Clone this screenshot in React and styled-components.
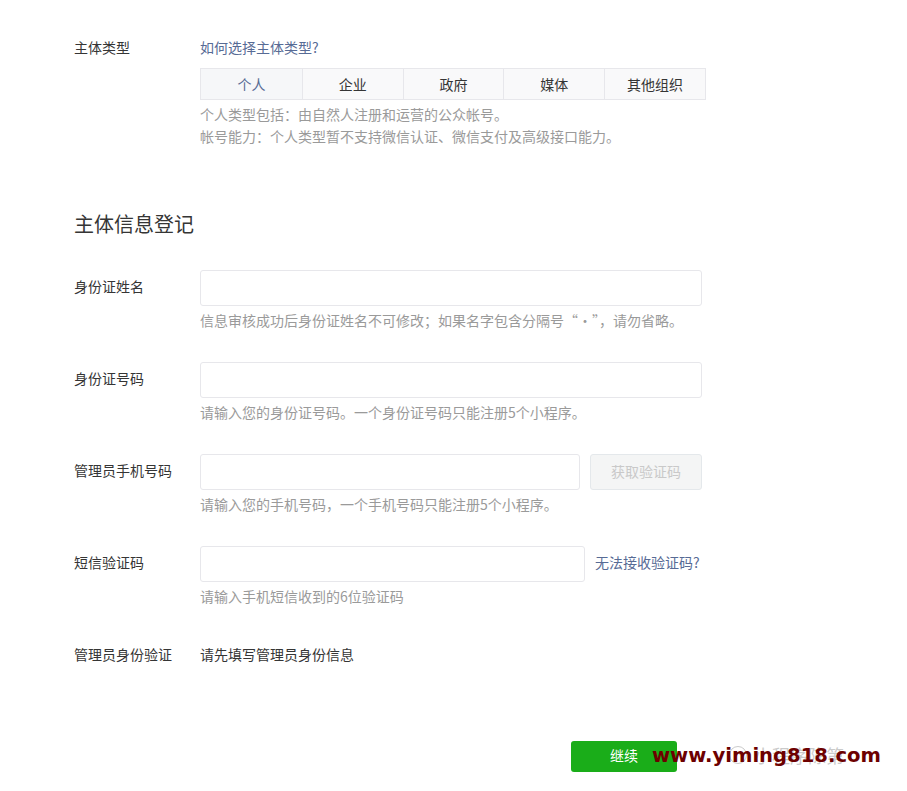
import React from "react";
import styled, { createGlobalStyle } from "styled-components";

const GlobalStyle = createGlobalStyle`
  html, body {
    margin: 0;
    padding: 0;
    background: #fff;
  }
  body {
    font-family: "Noto Sans CJK SC", "Noto Sans", "Liberation Sans", sans-serif;
    font-size: 14px;
    color: #353535;
  }
`;

const Page = styled.div`
  position: relative;
  width: 907px;
  height: 791px;
  padding: 38px 0 0 74px;
  box-sizing: border-box;
  overflow: hidden;
`;

const Row = styled.div`
  display: grid;
  grid-template-columns: 126px 502px;
  align-items: ${({ $top }) => ($top ? "start" : "center")};
  min-height: 36px;
`;

const Label = styled.div`
  font-size: 14px;
  line-height: 18px;
  color: #353535;
  margin-bottom: ${({ $top }) => ($top ? 0 : 4)}px;
`;

const Field = styled.div`
  display: flex;
  flex-direction: column;
`;

const Link = styled.a`
  color: #576b95;
  text-decoration: none;
  font-size: 14px;
  line-height: 18px;
  white-space: nowrap;
  cursor: pointer;
  margin-bottom: ${({ $shift }) => ($shift ? 4 : 0)}px;
`;

const Tabs = styled.div`
  display: grid;
  grid-template-columns: repeat(5, 1fr);
  width: 506px;
  margin-top: 12px;
  border: 1px solid #e7e7eb;
  box-sizing: border-box;
  background: #f9f9fa;
`;

const Tab = styled.div`
  height: 30px;
  line-height: 30px;
  text-align: center;
  font-size: 14px;
  color: ${({ $active }) => ($active ? "#576b95" : "#353535")};
  background: ${({ $active }) => ($active ? "#f6f7f9" : "transparent")};
  border-left: ${({ $first }) => ($first ? "none" : "1px solid #e7e7eb")};
`;

const Hint = styled.div`
  font-size: 14px;
  line-height: 22px;
  color: #9a9a9a;
  margin-top: ${({ $mt }) => $mt || 0}px;
  white-space: nowrap;
`;

const HintRow = styled(Hint)`
  padding: 0 0 2px 126px;
  margin-top: 3px;
`;

const Heading = styled.h2`
  margin: 63px 0 32px;
  font-size: 20px;
  line-height: 28px;
  font-weight: 400;
  color: #353535;
`;

const FormItem = styled.div`
  margin-bottom: ${({ $mb }) => ($mb === undefined ? 29 : $mb)}px;
`;

const InputLine = styled.div`
  display: flex;
  align-items: center;
  gap: 10px;
`;

const Input = styled.input`
  width: ${({ $w }) => $w}px;
  height: 36px;
  box-sizing: border-box;
  border: 1px solid #e7e7eb;
  border-radius: 3px;
  background: #fff;
  padding: 0 10px;
  font-size: 14px;
  outline: none;
`;

const CodeButton = styled.button`
  width: 112px;
  height: 36px;
  box-sizing: border-box;
  border: 1px solid #e4e8eb;
  border-radius: 3px;
  background: #f4f5f5;
  color: #c9c9c9;
  font-family: inherit;
  font-size: 14px;
  padding: 0 0 2px;
`;

const StaticText = styled.div`
  font-size: 14px;
  line-height: 18px;
  color: #353535;
  margin-bottom: 4px;
`;

const Footer = styled.div`
  margin-top: 67px;
  padding-left: 497px;
`;

const PrimaryButton = styled.button`
  display: block;
  width: 106px;
  height: 31px;
  border: none;
  border-radius: 3px;
  background: #1aad19;
  color: #fff;
  font-family: inherit;
  font-size: 14px;
  padding: 0 0 3px;
`;

const Watermark = styled.div`
  position: absolute;
  left: 652px;
  top: 742px;
  white-space: nowrap;
  pointer-events: none;
`;

const WatermarkFaint = styled.div`
  position: absolute;
  left: 76px;
  top: 0;
  display: flex;
  align-items: center;
  gap: 6px;
  color: rgba(150, 150, 150, 0.5);
  font-size: 18px;
  line-height: 26px;
`;

const WatermarkText = styled.div`
  position: relative;
  font-family: "DejaVu Sans", "Verdana", sans-serif;
  font-weight: bold;
  font-size: 19.6px;
  line-height: 28px;
  letter-spacing: 0;
  color: #6d0000;
`;

const tabs = ["个人", "企业", "政府", "媒体", "其他组织"];

export default function App() {
  return (
    <>
      <GlobalStyle />
      <Page>
        <Row $top>
          <Label $top>主体类型</Label>
          <Field>
            <Link>如何选择主体类型?</Link>
            <Tabs>
              {tabs.map((t, i) => (
                <Tab key={t} $active={i === 0} $first={i === 0}>
                  {t}
                </Tab>
              ))}
            </Tabs>
            <Hint $mt={3}>个人类型包括：由自然人注册和运营的公众帐号。</Hint>
            <Hint>帐号能力：个人类型暂不支持微信认证、微信支付及高级接口能力。</Hint>
          </Field>
        </Row>

        <Heading>主体信息登记</Heading>

        <FormItem>
          <Row>
            <Label>身份证姓名</Label>
            <Input $w={502} />
          </Row>
          <HintRow>信息审核成功后身份证姓名不可修改；如果名字包含分隔号“·”，请勿省略。</HintRow>
        </FormItem>

        <FormItem>
          <Row>
            <Label>身份证号码</Label>
            <Input $w={502} />
          </Row>
          <HintRow>请输入您的身份证号码。一个身份证号码只能注册5个小程序。</HintRow>
        </FormItem>

        <FormItem>
          <Row>
            <Label>管理员手机号码</Label>
            <InputLine>
              <Input $w={380} />
              <CodeButton>获取验证码</CodeButton>
            </InputLine>
          </Row>
          <HintRow>请输入您的手机号码，一个手机号码只能注册5个小程序。</HintRow>
        </FormItem>

        <FormItem>
          <Row>
            <Label>短信验证码</Label>
            <InputLine>
              <Input $w={385} />
              <Link $shift>无法接收验证码?</Link>
            </InputLine>
          </Row>
          <HintRow>请输入手机短信收到的6位验证码</HintRow>
        </FormItem>

        <FormItem $mb={0}>
          <Row>
            <Label>管理员身份验证</Label>
            <StaticText>请先填写管理员身份信息</StaticText>
          </Row>
        </FormItem>

        <Footer>
          <PrimaryButton>继续</PrimaryButton>
        </Footer>

        <Watermark>
          <WatermarkFaint>
            <svg width="20" height="20" viewBox="0 0 20 20">
              <circle cx="10" cy="10" r="8.5" fill="none" stroke="rgba(150,150,150,0.5)" strokeWidth="1" />
              <path d="M6 8 q2 -3 4 0 q2 3 4 0" fill="none" stroke="rgba(150,150,150,0.5)" strokeWidth="1" />
            </svg>
            <span>小程序陈第</span>
          </WatermarkFaint>
          <WatermarkText>www.yiming818.com</WatermarkText>
        </Watermark>
      </Page>
    </>
  );
}
